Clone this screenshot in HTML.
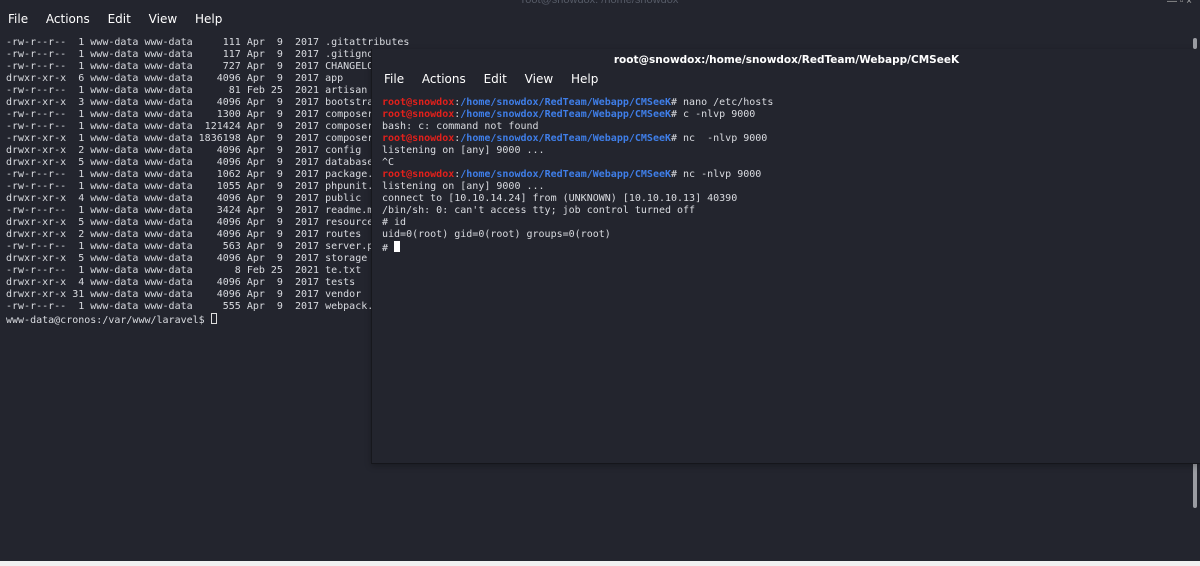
<!DOCTYPE html>
<html><head><style>
body{margin:0;width:1200px;height:566px;background:#23252e;position:relative;overflow:hidden;font-family:"Liberation Sans",sans-serif}
.menu{position:absolute;color:#fff;font-size:12px;font-family:"DejaVu Sans","Liberation Sans",sans-serif}
.menu span{margin-right:14px}
pre{position:absolute;margin:0;font-family:"DejaVu Sans Mono",monospace;font-size:10px;line-height:12px;color:#d9dbe0}
.r{color:#e3201b;font-weight:bold}.b{color:#3f7ee8;font-weight:bold}
.cur{display:inline-block;width:5px;height:10px;vertical-align:-1px}
</style></head><body>
<div style="position:absolute;top:-6px;left:0;width:1200px;text-align:center;color:#555a66;font-size:11px">root@snowdox: /home/snowdox</div>
<div style="position:absolute;right:8px;top:-4px;color:#aaa;font-size:10px">— ▫ ×</div>
<div class="menu" style="left:8px;top:12px"><span>File</span> <span>Actions</span> <span>Edit</span> <span>View</span> <span>Help</span></div>
<pre style="left:6px;top:37px">-rw-r--r--  1 www-data www-data     111 Apr  9  2017 .gitattributes
-rw-r--r--  1 www-data www-data     117 Apr  9  2017 .gitignore
-rw-r--r--  1 www-data www-data     727 Apr  9  2017 CHANGELOG.md
drwxr-xr-x  6 www-data www-data    4096 Apr  9  2017 app
-rw-r--r--  1 www-data www-data      81 Feb 25  2021 artisan
drwxr-xr-x  3 www-data www-data    4096 Apr  9  2017 bootstrap
-rw-r--r--  1 www-data www-data    1300 Apr  9  2017 composer.json
-rw-r--r--  1 www-data www-data  121424 Apr  9  2017 composer.lock
-rwxr-xr-x  1 www-data www-data 1836198 Apr  9  2017 composer.phar
drwxr-xr-x  2 www-data www-data    4096 Apr  9  2017 config
drwxr-xr-x  5 www-data www-data    4096 Apr  9  2017 database
-rw-r--r--  1 www-data www-data    1062 Apr  9  2017 package.json
-rw-r--r--  1 www-data www-data    1055 Apr  9  2017 phpunit.xml
drwxr-xr-x  4 www-data www-data    4096 Apr  9  2017 public
-rw-r--r--  1 www-data www-data    3424 Apr  9  2017 readme.md
drwxr-xr-x  5 www-data www-data    4096 Apr  9  2017 resources
drwxr-xr-x  2 www-data www-data    4096 Apr  9  2017 routes
-rw-r--r--  1 www-data www-data     563 Apr  9  2017 server.php
drwxr-xr-x  5 www-data www-data    4096 Apr  9  2017 storage
-rw-r--r--  1 www-data www-data       8 Feb 25  2021 te.txt
drwxr-xr-x  4 www-data www-data    4096 Apr  9  2017 tests
drwxr-xr-x 31 www-data www-data    4096 Apr  9  2017 vendor
-rw-r--r--  1 www-data www-data     555 Apr  9  2017 webpack.mix.js
www-data@cronos:/var/www/laravel$ <span class="cur" style="border:1px solid #ddd;width:4px;height:9px"></span></pre>
<div style="position:absolute;left:1193px;top:458px;width:4px;height:50px;background:#9a9ca2;border-radius:2px"></div>
<div style="position:absolute;left:0;top:561px;width:1200px;height:5px;background:#f0f0f0"></div>
<div style="position:absolute;left:371px;top:49px;width:829px;height:414px;background:#23252e;border-left:1px solid #17181d;border-bottom:1px solid #15161b;box-shadow:0 2px 6px rgba(0,0,0,.25)">
<div style="position:absolute;left:0;top:0;width:100%;height:21px;text-align:center;color:#fff;font-size:10.5px;font-weight:bold;line-height:22px;font-family:'DejaVu Sans',sans-serif">root@snowdox:/home/snowdox/RedTeam/Webapp/CMSeeK</div>
<div class="menu" style="left:12px;top:23px"><span>File</span> <span>Actions</span> <span>Edit</span> <span>View</span> <span>Help</span></div>
</div>
<div style="position:absolute;left:1193px;top:38px;width:4px;height:11px;background:#9a9ca2;border-radius:2px"></div>
<pre style="left:382px;top:97px"><span class="r">root@snowdox</span>:<span class="b">/home/snowdox/RedTeam/Webapp/CMSeeK</span># nano /etc/hosts
<span class="r">root@snowdox</span>:<span class="b">/home/snowdox/RedTeam/Webapp/CMSeeK</span># c -nlvp 9000
bash: c: command not found
<span class="r">root@snowdox</span>:<span class="b">/home/snowdox/RedTeam/Webapp/CMSeeK</span># nc  -nlvp 9000
listening on [any] 9000 ...
^C
<span class="r">root@snowdox</span>:<span class="b">/home/snowdox/RedTeam/Webapp/CMSeeK</span># nc -nlvp 9000
listening on [any] 9000 ...
connect to [10.10.14.24] from (UNKNOWN) [10.10.10.13] 40390
/bin/sh: 0: can't access tty; job control turned off
# id
uid=0(root) gid=0(root) groups=0(root)
# <span class="cur" style="background:#fff;height:11px;width:6px"></span></pre>
</body></html>
